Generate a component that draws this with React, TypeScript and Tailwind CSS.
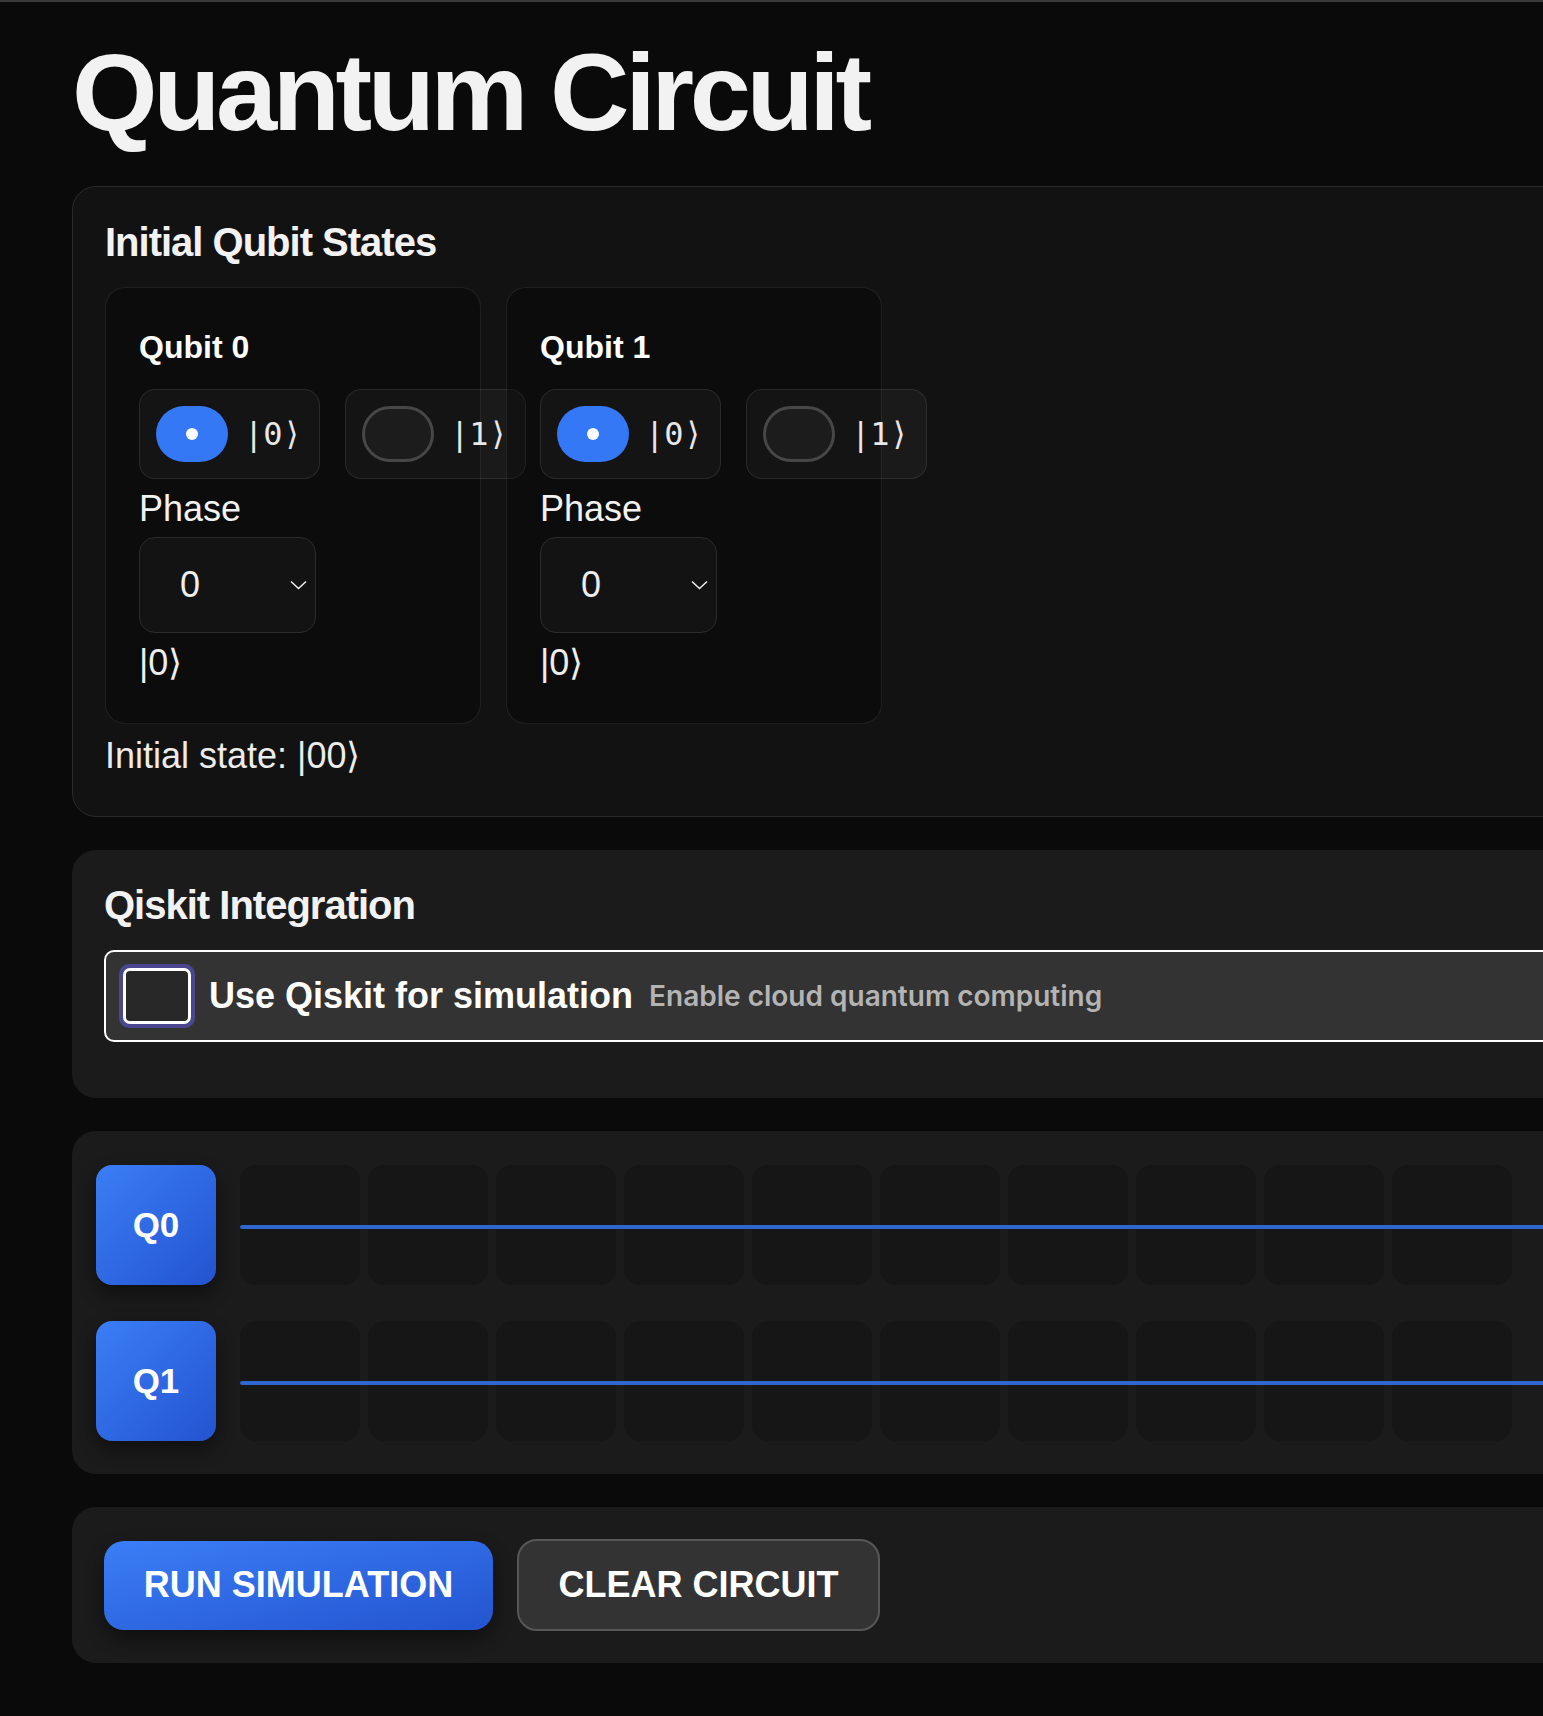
import React from "react";

const cells = Array.from({ length: 10 }, (_, i) => i);

function StateOption({ value, active }: { value: number; active?: boolean }) {
  return (
    <div className="flex h-[90px] w-[181px] shrink-0 items-center gap-4 rounded-2xl border border-white/[0.09] bg-white/[0.035] px-4">
      {active ? (
        <div className="flex h-14 w-[72px] shrink-0 items-center justify-center rounded-full bg-[#3478f6]">
          <div className="h-3 w-3 rounded-full bg-white" />
        </div>
      ) : (
        <div className="h-14 w-[72px] shrink-0 rounded-full border-[3px] border-[#474747] bg-[#1c1c1c]" />
      )}
      <span className="font-['DejaVu_Sans_Mono',monospace] text-[32px] leading-none text-[#e8e8e8]">
        |{value}⟩
      </span>
    </div>
  );
}

function QubitCard({ index }: { index: number }) {
  return (
    <div className="w-[376px] shrink-0 rounded-[20px] border border-white/[0.08] bg-black/30 px-[33px] pt-8 pb-[38px]">
      <h3 className="mb-[15px] text-[32px] leading-[54px] font-bold text-white">Qubit {index}</h3>
      <div className="flex gap-[25px]">
        <StateOption value={0} active />
        <StateOption value={1} />
      </div>
      <div className="mt-2 text-[36px] leading-[44px] text-[#f2f2f2]">Phase</div>
      <div className="mt-[6px] flex h-[96px] w-[177px] items-center justify-between rounded-2xl border border-[#2c2c2c] bg-[#131313] pr-2 pl-10">
        <span className="text-[36px] leading-none text-[#eeeeee]">0</span>
        <svg width="17" height="10" viewBox="0 0 17 10" fill="none">
          <polyline points="1,1.5 8.5,8.5 16,1.5" stroke="#f0f0f0" strokeWidth="1.5" />
        </svg>
      </div>
      <div className="mt-2 text-[36px] leading-[44px] text-[#eeeeee]">|0⟩</div>
    </div>
  );
}

function QubitRow({ label }: { label: string }) {
  return (
    <div className="flex items-center gap-6">
      <div className="flex h-[120px] w-[120px] shrink-0 items-center justify-center rounded-2xl bg-linear-to-br from-[#3b7ef7] to-[#2453cf] shadow-[0_8px_18px_rgba(0,0,0,0.45)]">
        <span className="text-[35px] font-bold text-white">{label}</span>
      </div>
      <div className="relative flex flex-1 gap-2">
        {cells.map((c) => (
          <div key={c} className="h-[120px] w-[120px] shrink-0 rounded-2xl bg-[#161616]" />
        ))}
        <div className="absolute top-1/2 right-0 left-0 h-1 rounded-full bg-[#2f66d0]" />
      </div>
    </div>
  );
}

export default function App() {
  return (
    <div className="min-h-screen w-full overflow-hidden border-t-2 border-[#3a3a3a] bg-[#0a0a0a] font-['Liberation_Sans',Arial,sans-serif]">
      <div className="w-[1800px] pt-[35px] pb-16 pl-[72px]">
        <h1 className="mb-[39px] text-[110px] leading-none font-bold tracking-[-0.04em] text-[#f2f2f2]">
          Quantum Circuit
        </h1>

        <div className="flex flex-col gap-[33px]">
          {/* initial states */}
          <section className="rounded-3xl border border-[#2a2a2a] bg-[#121212] px-8 pt-8 pb-[38px]">
            <h2 className="mb-[22px] text-[40px] leading-[46px] font-bold tracking-[-0.025em] text-[#f2f2f2]">
              Initial Qubit States
            </h2>
            <div className="flex gap-[25px]">
              <QubitCard index={0} />
              <QubitCard index={1} />
            </div>
            <p className="mt-[10px] text-[36px] leading-[44px] text-[#ececec]">Initial state: |00⟩</p>
          </section>

          {/* qiskit */}
          <section className="rounded-3xl bg-[#1b1b1b] px-8 pt-8 pb-14">
            <h2 className="mb-[22px] text-[40px] leading-[46px] font-bold tracking-[-0.025em] text-[#f2f2f2]">
              Qiskit Integration
            </h2>
            <label className="flex h-[92px] items-center rounded-[10px] border-2 border-white bg-[#333333] px-[13px]">
              <div className="h-[64px] w-[76px] shrink-0 rounded-[10px] bg-[#4a4790] p-[4px]">
                <div className="h-full w-full rounded-[7px] border-[3px] border-white bg-[#282828]" />
              </div>
              <span className="ml-[14px] text-[36px] font-bold text-white">Use Qiskit for simulation</span>
              <span className="ml-4 font-['Inter',sans-serif] text-[28px] font-semibold text-[#b4b4b4]">
                Enable cloud quantum computing
              </span>
            </label>
          </section>

          {/* circuit */}
          <section className="flex flex-col gap-9 rounded-3xl bg-[#1b1b1b] px-6 pt-[34px] pb-[33px]">
            <QubitRow label="Q0" />
            <QubitRow label="Q1" />
          </section>

          {/* controls */}
          <section className="flex items-center gap-6 rounded-3xl bg-[#1b1b1b] p-8">
            <button className="flex h-[89px] w-[389px] items-center justify-center rounded-[20px] bg-linear-to-br from-[#3b7ef7] to-[#2454cf] text-[36px] font-bold text-white shadow-[0_8px_18px_rgba(0,0,0,0.45)]">
              RUN SIMULATION
            </button>
            <button className="flex h-[92px] w-[363px] items-center justify-center rounded-[20px] border-2 border-[#575757] bg-[#333333] text-[36px] font-bold text-white">
              CLEAR CIRCUIT
            </button>
          </section>
        </div>
      </div>
    </div>
  );
}
